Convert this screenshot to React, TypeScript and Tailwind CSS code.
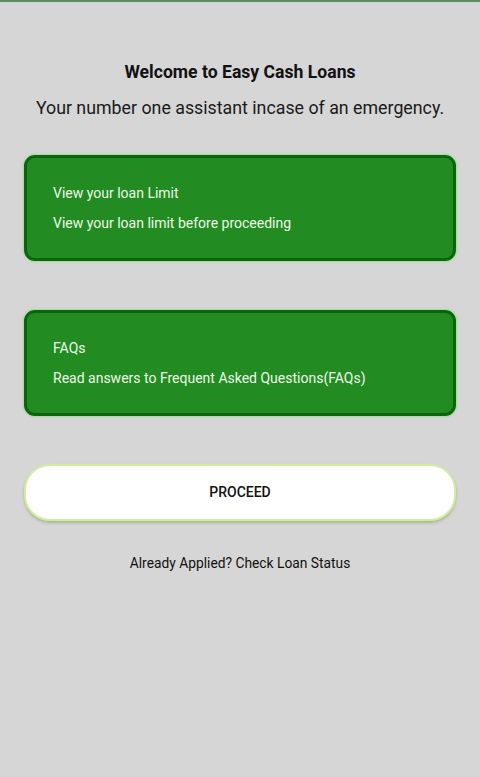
export default function App() {
    const cards = [
        { title: 'View your loan Limit', text: 'View your loan limit before proceeding' },
        { title: 'FAQs', text: 'Read answers to Frequent Asked Questions(FAQs)' },
    ];

    return (
        <div className="min-h-[777px] bg-[#d6d6d6] border-t-2 border-[#5f8f5f]" style={{ fontFamily: 'Roboto, "Noto Sans", sans-serif' }}>
            <div className="px-6 pt-[59px]">
                {/* Header */}
                <h1 className="text-center text-[17.6px] font-bold text-[#111] leading-[22px]">Welcome to Easy Cash Loans</h1>
                <p className="text-center text-[17.8px] text-[#1a1a1a] mt-[13px] leading-[24px]">Your number one assistant incase of an emergency.</p>

                {/* Cards */}
                <div className="mt-[35px] flex flex-col gap-[49px]">
                    {cards.map((card) => (
                        <div
                            key={card.title}
                            className="h-[106px] rounded-[11px] bg-[#228b22] border-[3px] border-[#0b650b] shadow-[0_0_2px_1px_#9fd89f] px-[26px] pt-[25px]"
                        >
                            <div className="text-[14px] leading-[20px] text-[#eef8e8]">{card.title}</div>
                            <div className="text-[14px] leading-[20px] text-[#eef8e8] mt-[10px]">{card.text}</div>
                        </div>
                    ))}
                </div>

                {/* Proceed */}
                <button className="mt-[48px] w-full h-[57px] rounded-[26px] bg-white border-2 border-[#d2eca0] shadow-[0_2px_3px_#a8b890] text-[14px] font-medium text-[#111]">
                    PROCEED
                </button>

                <p className="text-center text-[13.8px] text-[#111] mt-[32px]">Already Applied? Check Loan Status</p>
            </div>
        </div>
    );
}
